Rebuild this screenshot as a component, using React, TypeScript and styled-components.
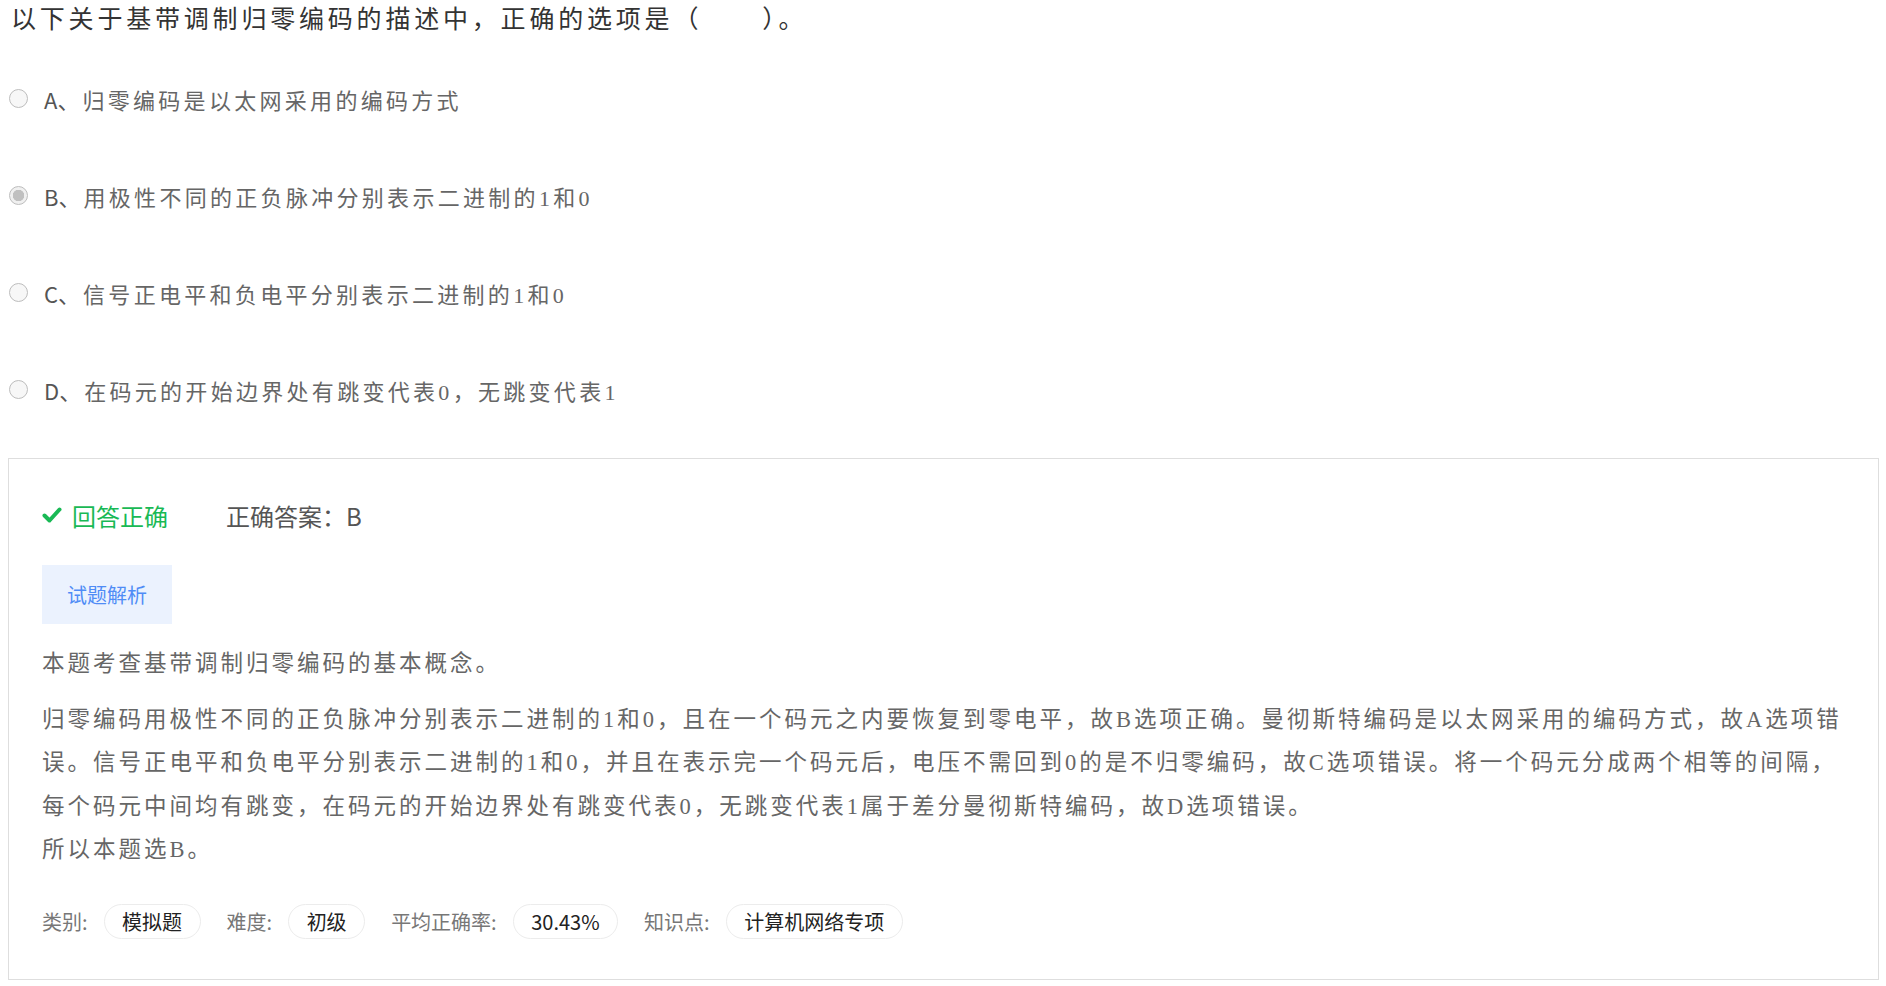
import React from "react";
import styled, { createGlobalStyle } from "styled-components";

const SERIF = `"Liberation Serif", "Noto Sans CJK SC", serif`;
const SANS = `"Noto Sans CJK SC", "Noto Sans", sans-serif`;

const GlobalStyle = createGlobalStyle`
  html, body { margin: 0; padding: 0; background: #fff; }
  body { font-family: ${SANS}; }
`;

const Page = styled.div`
  padding: 0 7px 0 8px;
`;

const Title = styled.h1`
  margin: 0 0 10px 3px;
  font-family: ${SERIF};
  font-weight: normal;
  font-size: 25px;
  line-height: 40px;
  letter-spacing: 3.8px;
  color: #333;
  white-space: nowrap;
`;

const Blank = styled.span`
  display: inline-block;
  width: 60px;
`;

const OptionList = styled.div`
  display: flex;
  flex-direction: column;
`;

const OptionRow = styled.label`
  display: flex;
  align-items: center;
  height: 97px;
`;

const Radio = styled.input.attrs({ type: "radio" })`
  appearance: none;
  -webkit-appearance: none;
  box-sizing: border-box;
  width: 19px;
  height: 19px;
  margin: 0 16px 0 1px;
  border: 1px solid #bdbdbd;
  border-radius: 50%;
  background: #f7f7f7;
  flex: none;
  &:checked {
    background: radial-gradient(circle, #c0c0c0 0 5.5px, #f0f0f0 6px);
  }
`;

const OptionKey = styled.span`
  font-family: ${SANS};
  font-size: 22px;
  color: #555;
  margin-right: 3px;
`;

const OptionText = styled.span`
  font-family: ${SERIF};
  font-size: 22px;
  letter-spacing: 3.3px;
  color: #666;
  white-space: nowrap;
`;

const AnswerBox = styled.section`
  margin-top: 20px;
  border: 1px solid #dedede;
  padding: 36px 24px 40px 33px;
`;

const ResultRow = styled.div`
  display: flex;
  align-items: center;
  height: 40px;
  gap: 58px;
  font-family: ${SANS};
  font-size: 24px;
`;

const Correct = styled.span`
  display: flex;
  align-items: center;
  gap: 10px;
  color: #19b955;
`;

const AnswerText = styled.span`
  color: #555;
`;

const Tab = styled.div`
  margin-top: 30px;
  width: fit-content;
  height: 59px;
  padding: 0 25px;
  display: flex;
  align-items: center;
  background: #ebf2fe;
  color: #4f8cf6;
  font-family: ${SANS};
  font-size: 20px;
`;

const Paragraph = styled.p<{ $gap: number }>`
  margin: ${(p) => p.$gap}px 0 0;
  font-family: ${SERIF};
  font-size: 22.5px;
  letter-spacing: 3px;
  line-height: 43.6px;
  color: #666;
`;

const MetaRow = styled.div`
  margin-top: 32px;
  display: flex;
  align-items: center;
  font-family: ${SANS};
  font-size: 20px;
`;

const MetaGroup = styled.div`
  display: flex;
  align-items: center;
  margin-right: 26px;
`;

const MetaLabel = styled.span`
  color: #777;
  margin-right: 16px;
`;

const Chip = styled.span`
  box-sizing: border-box;
  height: 35px;
  padding: 0 17.5px;
  display: flex;
  align-items: center;
  border: 1px solid #ececec;
  border-radius: 18px;
  background: #fff;
  color: #222;
`;

const CheckIcon = () => (
  <svg width="20" height="18" viewBox="0 0 20 18" aria-hidden="true">
    <path
      d="M2.5 9.5 L7.5 14.5 L17.5 3.5"
      fill="none"
      stroke="#19b955"
      strokeWidth="4"
      strokeLinecap="round"
      strokeLinejoin="round"
    />
  </svg>
);

const options = [
  { key: "A", text: "归零编码是以太网采用的编码方式" },
  { key: "B", text: "用极性不同的正负脉冲分别表示二进制的1和0" },
  { key: "C", text: "信号正电平和负电平分别表示二进制的1和0" },
  { key: "D", text: "在码元的开始边界处有跳变代表0，无跳变代表1" },
];

const meta = [
  { label: "类别:", value: "模拟题" },
  { label: "难度:", value: "初级" },
  { label: "平均正确率:", value: "30.43%" },
  { label: "知识点:", value: "计算机网络专项" },
];

export default function App() {
  return (
    <Page>
      <GlobalStyle />
      <Title>
        以下关于基带调制归零编码的描述中，正确的选项是（<Blank />）。
      </Title>
      <OptionList>
        {options.map((o) => (
          <OptionRow key={o.key}>
            <Radio name="q" disabled defaultChecked={o.key === "B"} />
            <OptionKey>{o.key}、</OptionKey>
            <OptionText>{o.text}</OptionText>
          </OptionRow>
        ))}
      </OptionList>
      <AnswerBox>
        <ResultRow>
          <Correct>
            <CheckIcon />
            回答正确
          </Correct>
          <AnswerText>正确答案：B</AnswerText>
        </ResultRow>
        <Tab>试题解析</Tab>
        <Paragraph $gap={18}>本题考查基带调制归零编码的基本概念。</Paragraph>
        <Paragraph $gap={12}>
          归零编码用极性不同的正负脉冲分别表示二进制的1和0，且在一个码元之内要恢复到零电平，故B选项正确。曼彻斯特编码是以太网采用的编码方式，故A选项错误。信号正电平和负电平分别表示二进制的1和0，并且在表示完一个码元后，电压不需回到0的是不归零编码，故C选项错误。将一个码元分成两个相等的间隔，每个码元中间均有跳变，在码元的开始边界处有跳变代表0，无跳变代表1属于差分曼彻斯特编码，故D选项错误。
          <br />
          所以本题选B。
        </Paragraph>
        <MetaRow>
          {meta.map((m) => (
            <MetaGroup key={m.label}>
              <MetaLabel>{m.label}</MetaLabel>
              <Chip>{m.value}</Chip>
            </MetaGroup>
          ))}
        </MetaRow>
      </AnswerBox>
    </Page>
  );
}
